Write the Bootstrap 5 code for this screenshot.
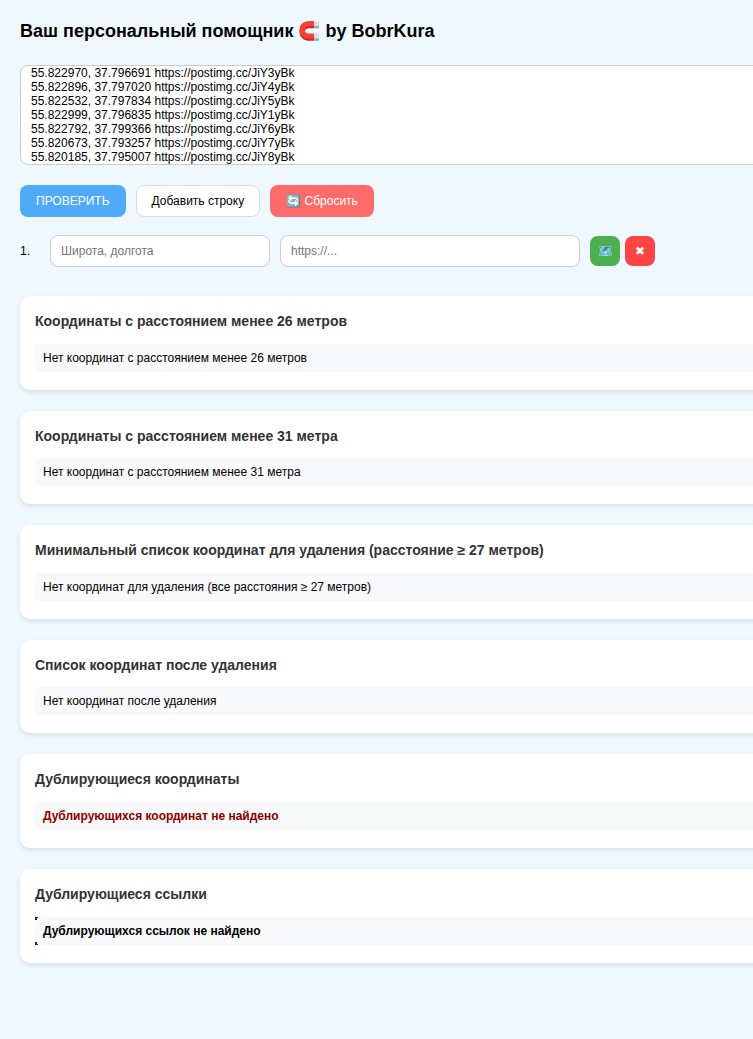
<!DOCTYPE html>
<html lang="ru">
<head>
    <meta charset="UTF-8">
    <title>Помощник</title>
    <link href="https://cdn.jsdelivr.net/npm/bootstrap@5.3.0/dist/css/bootstrap.min.css" rel="stylesheet">
    <style>
        html, body {
            overflow: hidden;
        }

        body {
            background: #f0f8ff;
            font-family: "Liberation Sans", Arial, sans-serif;
            color: #000;
            min-height: 1039px;
        }

        .page-wrap {
            width: 1000px;
            padding: 20px;
        }

        .page-title {
            font-size: 18px;
            font-weight: 700;
            line-height: 22px;
            margin-bottom: 23px;
        }

        .coords-area {
            display: block;
            width: 100%;
            height: 100px;
            padding: 10px;
            font-size: 12px;
            line-height: 14px;
            border: 1px solid #ccc;
            border-radius: 8px;
            margin-bottom: 20px;
            resize: none;
            overflow: hidden;
            color: #000;
            font-family: inherit;
        }

        .act-row {
            gap: 10px;
            margin-bottom: 18px;
        }

        .act-btn {
            height: 32px;
            padding: 0 15px;
            font-size: 12px;
            line-height: 30px;
            border-radius: 8px;
            border: 1px solid transparent;
        }

        .act-check { background: #4dabf7; color: #fff; }
        .act-add { background: #fff; color: #000; border-color: #ddd; }
        .act-reset { background: #ff6b6b; color: #fff; }

        .point-row {
            margin-bottom: 29px;
        }

        .row-num {
            width: 30px;
            font-size: 12px;
        }

        .point-input {
            height: 32px;
            padding: 0 10px;
            margin-right: 10px;
            font-size: 12px;
            border: 1px solid #ccc;
            border-radius: 8px;
            background: #fff;
        }

        .point-input::placeholder { color: #757575; }
        .w-coord { width: 220px; }
        .w-link { width: 300px; }

        .sq-btn {
            width: 30px;
            height: 30px;
            padding: 0;
            font-size: 12px;
            line-height: 30px;
            border: 0;
            border-radius: 8px;
            color: #fff;
        }

        .sq-map { background: #4caf50; margin-right: 5px; }
        .sq-del { background: #f44; }

        .result-box {
            background: #fff;
            border-radius: 10px;
            padding: 15px;
            margin-bottom: 21px;
            box-shadow: 0 2px 5px rgba(0, 0, 0, .1);
        }

        .result-title {
            font-size: 14px;
            font-weight: 700;
            line-height: 20px;
            color: #333;
            margin-bottom: 12.6px;
        }

        .result-msg {
            background: #f8f9fa;
            border-radius: 4px;
            padding: 0 8px;
            margin-bottom: 3px;
            font-size: 12px;
            line-height: 28px;
        }

        .msg-dup { color: #8b0000; font-weight: 700; }

        .msg-bold {
            position: relative;
            font-weight: 700;
            border-radius: 0;
        }

        /* тёмно-красные уголки слева у последнего блока */
        .msg-bold::before {
            content: "";
            position: absolute;
            left: 0;
            top: 0;
            bottom: 0;
            width: 3px;
            background:
                linear-gradient(#8b0000, #8b0000) 0 0 / 3px 1px no-repeat,
                linear-gradient(#8b0000, #8b0000) 0 0 / 2px 3px no-repeat,
                linear-gradient(#8b0000, #8b0000) 0 100% / 3px 1px no-repeat,
                linear-gradient(#8b0000, #8b0000) 0 100% / 2px 3px no-repeat;
        }
    </style>
</head>
<body>

<div class="page-wrap">
    <h1 class="page-title">Ваш персональный помощник 🧲 by BobrKura</h1>

    <textarea id="coords" class="coords-area" spellcheck="false">55.822970, 37.796691 https://postimg.cc/JiY3yBk
55.822896, 37.797020 https://postimg.cc/JiY4yBk
55.822532, 37.797834 https://postimg.cc/JiY5yBk
55.822999, 37.796835 https://postimg.cc/JiY1yBk
55.822792, 37.799366 https://postimg.cc/JiY6yBk
55.820673, 37.793257 https://postimg.cc/JiY7yBk
55.820185, 37.795007 https://postimg.cc/JiY8yBk</textarea>

    <div class="d-flex act-row">
        <button class="act-btn act-check">ПРОВЕРИТЬ</button>
        <button class="act-btn act-add">Добавить строку</button>
        <button class="act-btn act-reset">🔄 Сбросить</button>
    </div>

    <div class="d-flex align-items-center point-row">
        <span class="row-num">1.</span>
        <input class="point-input w-coord" placeholder="Широта, долгота">
        <input class="point-input w-link" placeholder="https://...">
        <button class="sq-btn sq-map">🗺️</button>
        <button class="sq-btn sq-del">✖</button>
    </div>

    <div class="result-box">
        <h3 class="result-title">Координаты с расстоянием менее 26 метров</h3>
        <div class="result-msg">Нет координат с расстоянием менее 26 метров</div>
    </div>
    <div class="result-box">
        <h3 class="result-title">Координаты с расстоянием менее 31 метра</h3>
        <div class="result-msg">Нет координат с расстоянием менее 31 метра</div>
    </div>
    <div class="result-box">
        <h3 class="result-title">Минимальный список координат для удаления (расстояние ≥ 27 метров)</h3>
        <div class="result-msg">Нет координат для удаления (все расстояния ≥ 27 метров)</div>
    </div>
    <div class="result-box">
        <h3 class="result-title">Список координат после удаления</h3>
        <div class="result-msg">Нет координат после удаления</div>
    </div>
    <div class="result-box">
        <h3 class="result-title">Дублирующиеся координаты</h3>
        <div class="result-msg msg-dup">Дублирующихся координат не найдено</div>
    </div>
    <div class="result-box">
        <h3 class="result-title">Дублирующиеся ссылки</h3>
        <div class="result-msg msg-bold">Дублирующихся ссылок не найдено</div>
    </div>
</div>

<script src="https://cdn.jsdelivr.net/npm/bootstrap@5.3.0/dist/js/bootstrap.bundle.min.js"></script>
<script>
    document.getElementById('coords').scrollTop = 10;
</script>
</body>
</html>
